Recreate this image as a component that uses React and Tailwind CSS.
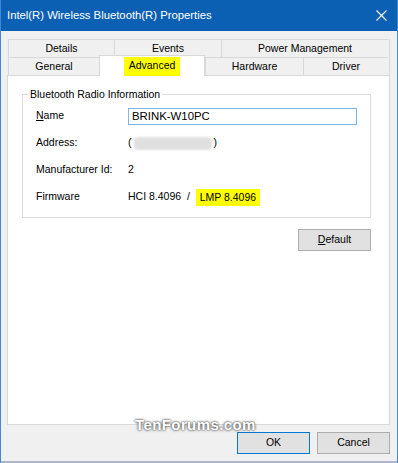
import React from 'react';

const font = { fontFamily: '"Liberation Sans", Arial, sans-serif' };

const Tab = ({ label }) => (
  <div className="flex items-center justify-center border-t border-l border-[#d9d9d9] bg-[#f0f0f0] text-[10.5px] text-black">
    {label}
  </div>
);

const Row = ({ label, children, className = '' }) => (
  <div className={`flex items-center h-[18px] ${className}`}>
    <div className="w-[92px] whitespace-nowrap text-[10.5px] text-black">{label}</div>
    <div className="flex items-center whitespace-nowrap text-[10.5px] text-black">{children}</div>
  </div>
);

export default function App() {
  return (
    <div className="w-[398px] h-[463px] bg-[#f0f0f0] flex flex-col border-x border-[#3f8ad8] overflow-hidden" style={font}>
      <div className="h-[31px] shrink-0 bg-[#0c60b3] flex items-center justify-between pl-[7px] -mx-px">
        <span className="text-[11.3px] text-white">Intel(R) Wireless Bluetooth(R) Properties</span>
        <svg width="46" height="31" viewBox="0 0 46 31">
          <path d="M24.5 10.5 L34.5 20.5 M34.5 10.5 L24.5 20.5" stroke="white" strokeWidth="1.1" />
        </svg>
      </div>

      <div className="flex-1 flex flex-col pl-[6px] pr-[7px] pt-[8px]">
        {/* tabs */}
        <div className="ml-[1px] grid grid-cols-[106px_107px_167px] h-[18px] border-r border-[#d9d9d9]">
          <Tab label="Details" />
          <Tab label="Events" />
          <Tab label="Power Management" />
        </div>
        <div className="ml-[1px] grid grid-cols-[91px_106px_98px_85px] h-[18px] border-r border-[#d9d9d9]">
          <Tab label="General" />
          <div className="relative">
            <div className="absolute left-0 right-0 top-[-2px] bottom-[-1px] bg-white border-x border-t border-[#d9d9d9] flex justify-center pt-[1px] z-10">
              <span className="bg-[#ffff00] w-[56px] h-[19px] text-center text-[10.5px] leading-[17px] text-black">Advanced</span>
            </div>
          </div>
          <Tab label="Hardware" />
          <Tab label="Driver" />
        </div>

        {/* panel */}
        <div className="h-[350px] bg-white border border-[#d9d9d9] pt-[18px] pl-[14px] pr-[18px]">
          <div className="relative border border-[#dcdcdc] h-[124px] pl-[13px] pr-[12px] pt-[12px]">
            <span className="absolute left-[5px] top-[-8px] bg-white px-[2px] text-[10.5px] leading-[14px] text-black">Bluetooth Radio Information</span>
            <Row label={<span><u>N</u>ame</span>}>
              <div className="w-[229px] h-[17px] border border-[#7eb4ea] px-[3px] text-[11.4px] leading-[15px]">BRINK-W10PC</div>
            </Row>
            <Row label="Address:" className="mt-[9px]">
              <span>(</span>
              <span className="w-[78px] h-[13px] rounded-[4px] bg-[#e0e0e0] mx-[2px] blur-[1px]" />
              <span>)</span>
            </Row>
            <Row label="Manufacturer Id:" className="mt-[9px]">2</Row>
            <Row label="Firmware" className="mt-[9px]">
              <span>HCI 8.4096&nbsp;&nbsp;/&nbsp;&nbsp;</span>
              <span className="bg-[#ffff00] h-[17px] px-[4px] leading-[17px]">LMP 8.4096</span>
            </Row>
          </div>
          <div className="flex justify-end mt-[11px]">
            <button className="w-[73px] h-[22px] bg-[#e1e1e1] border border-[#adadad] text-[10.5px] text-black"><u>D</u>efault</button>
          </div>
        </div>

        {/* buttons */}
        <div className="relative flex justify-end gap-[7px] mt-[7px]">
          <span className="absolute left-[128px] top-[-16px] text-[15px] leading-[18px] font-bold tracking-[0.4px] text-white [text-shadow:0_0_2px_#444,0_0_3px_#666]">TenForums.com</span>
          <button className="w-[73px] h-[22px] bg-[#e1e1e1] border border-[#0078d7] text-[10.5px] text-black">OK</button>
          <button className="w-[73px] h-[22px] bg-[#e1e1e1] border border-[#adadad] text-[10.5px] text-black">Cancel</button>
        </div>
      </div>
      <div className="h-[2px] shrink-0 bg-[#a9b8cc] -mx-px" />
    </div>
  );
}
